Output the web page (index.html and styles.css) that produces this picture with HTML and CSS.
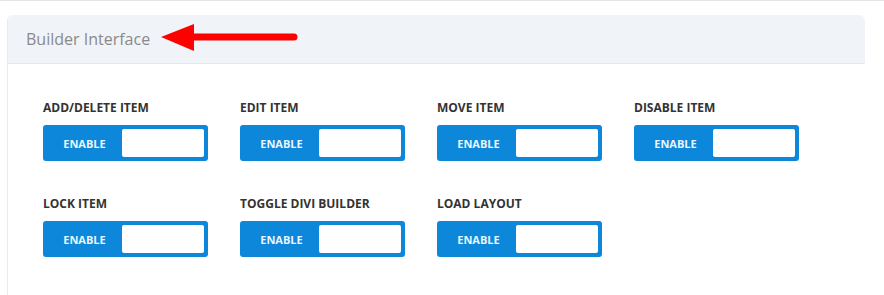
FILE: index.html
```html
<!DOCTYPE html>
<html>
<head>
<meta charset="utf-8">
<link rel="stylesheet" href="styles.css">
</head>
<body>
<div class="page">
  <section class="panel">
    <header class="panel-head">
      <h2 class="panel-title">Builder Interface</h2>
      <svg class="arrow" width="138" height="30" viewBox="0 0 138 30">
        <polygon points="0,14 33,1 33,28" fill="#f00"/>
        <line x1="30" y1="14" x2="133" y2="14" stroke="#f00" stroke-width="7" stroke-linecap="round"/>
      </svg>
    </header>
    <div class="panel-body">
      <div class="option"><div class="label">ADD/DELETE ITEM</div><div class="toggle"><span class="toggle-text">ENABLE</span><span class="toggle-box"></span></div></div>
      <div class="option"><div class="label">EDIT ITEM</div><div class="toggle"><span class="toggle-text">ENABLE</span><span class="toggle-box"></span></div></div>
      <div class="option"><div class="label">MOVE ITEM</div><div class="toggle"><span class="toggle-text">ENABLE</span><span class="toggle-box"></span></div></div>
      <div class="option"><div class="label">DISABLE ITEM</div><div class="toggle"><span class="toggle-text">ENABLE</span><span class="toggle-box"></span></div></div>
      <div class="option"><div class="label">LOCK ITEM</div><div class="toggle"><span class="toggle-text">ENABLE</span><span class="toggle-box"></span></div></div>
      <div class="option"><div class="label">TOGGLE DIVI BUILDER</div><div class="toggle"><span class="toggle-text">ENABLE</span><span class="toggle-box"></span></div></div>
      <div class="option"><div class="label">LOAD LAYOUT</div><div class="toggle"><span class="toggle-text">ENABLE</span><span class="toggle-box"></span></div></div>
    </div>
  </section>
</div>
</body>
</html>
```
FILE: styles.css
```css
html, body {
  margin: 0;
  padding: 0;
  background: #fff;
  font-family: "Open Sans", "Noto Sans", sans-serif;
}
.page {
  border-top: 1px solid #e4e4e4;
  padding: 14px 0 0 7px;
  width: 877px;
  height: 280px;
  overflow: hidden;
}
.panel {
  width: 857px;
  border-left: 1px solid #e8ebef;
  border-radius: 6px 6px 0 0;
}
.panel-head {
  display: flex;
  align-items: center;
  height: 48px;
  background: #f0f3f7;
  border-bottom: 1px solid #e2e8ee;
  border-radius: 6px 6px 0 0;
  padding-left: 18px;
}
.panel-title {
  margin: 0;
  font-size: 16px;
  font-weight: 400;
  color: #8a8a8a;
}
.arrow {
  margin-left: 11px;
  margin-top: -3px;
}
.panel-body {
  display: grid;
  grid-template-columns: repeat(4, 165px);
  column-gap: 32px;
  row-gap: 35px;
  padding: 36px 0 60px 35px;
}
.label {
  font-size: 12px;
  line-height: 16px;
  font-weight: 700;
  color: #333;
  margin-bottom: 9px;
}
.toggle {
  display: flex;
  align-items: stretch;
  height: 36px;
  background: #0c87d9;
  border-radius: 3px;
  box-sizing: border-box;
  padding: 4px 4px 4px 0;
}
.toggle-text {
  width: 79px;
  display: flex;
  align-items: center;
  justify-content: center;
  font-size: 11px;
  font-weight: 700;
  color: #eaf5fc;
  padding-left: 4px;
  box-sizing: border-box;
}
.toggle-box {
  flex: 1;
  background: #fff;
  border-radius: 2px;
}
```
